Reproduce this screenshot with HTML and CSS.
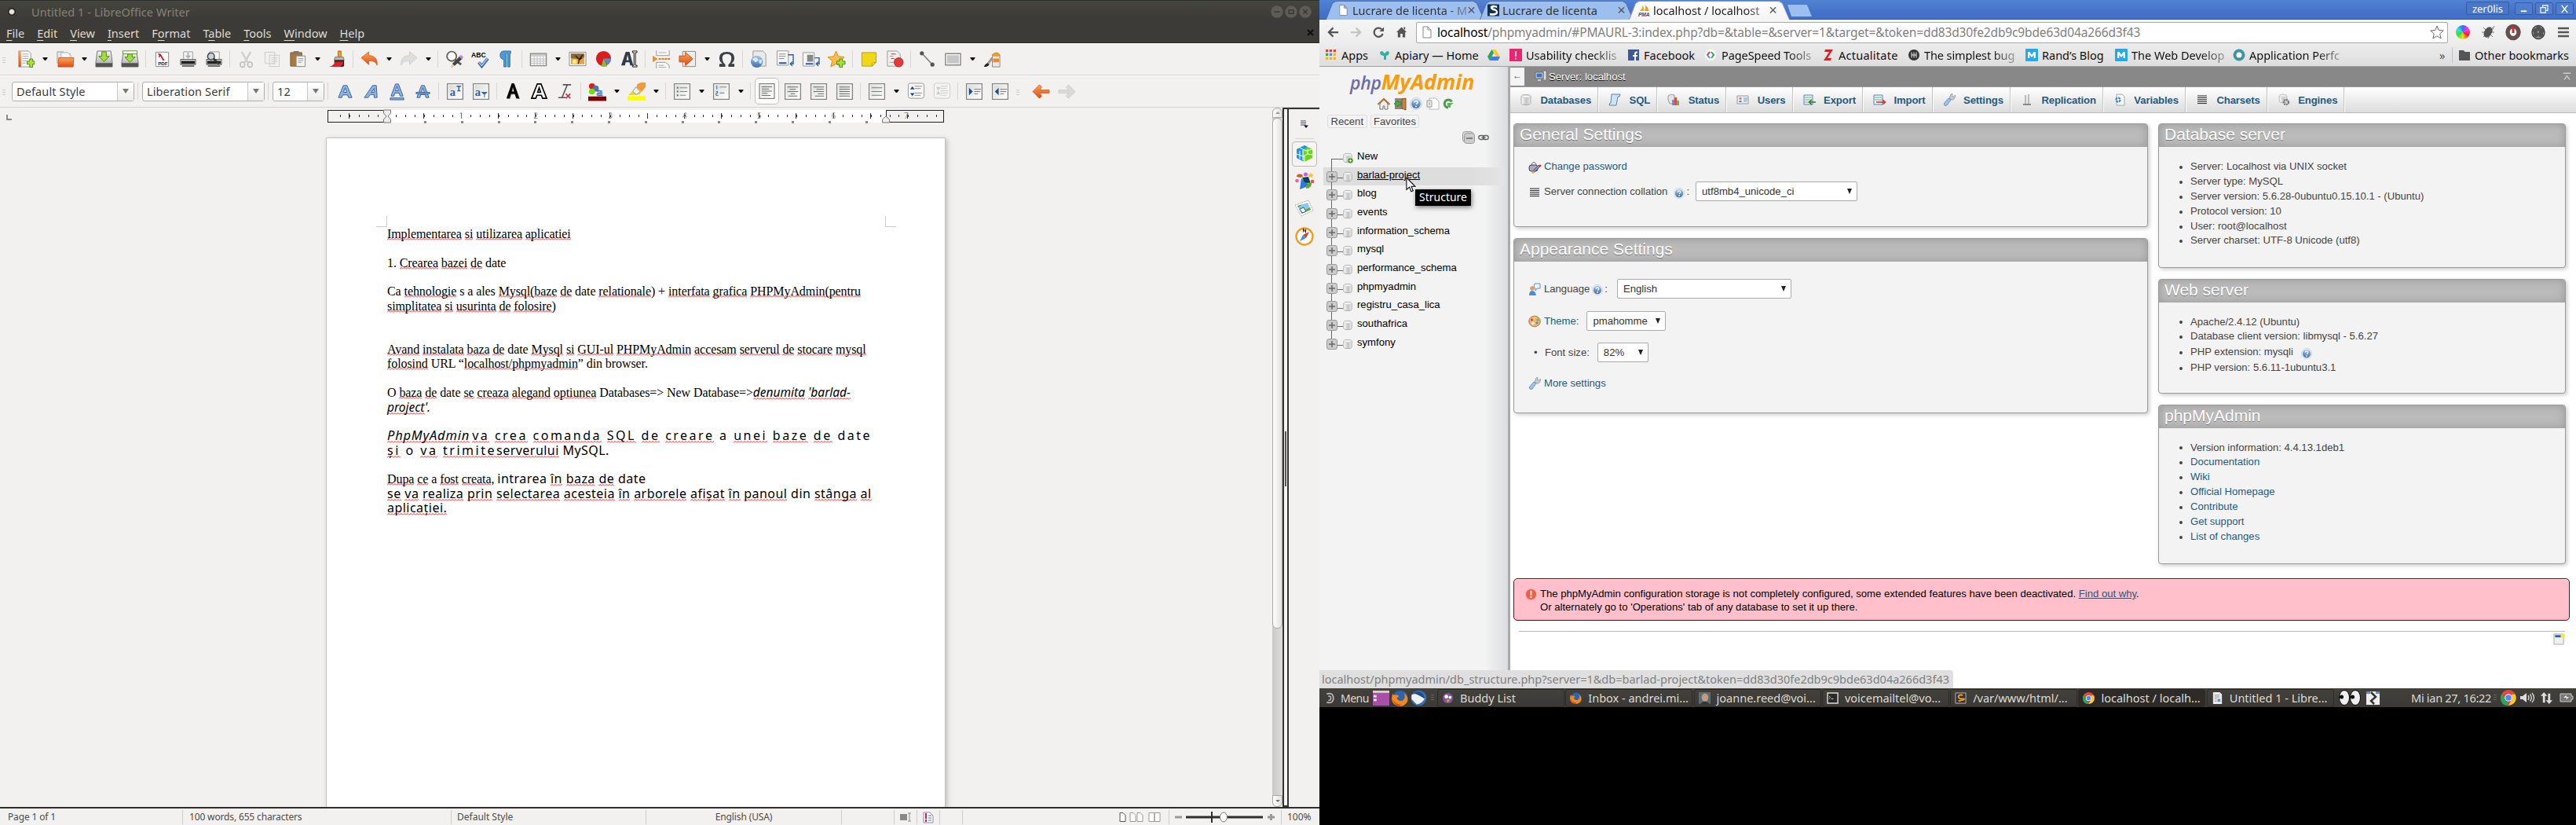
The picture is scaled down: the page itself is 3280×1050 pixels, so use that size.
FILE: index.html
```html
<!DOCTYPE html>
<html lang="ro">
<head>
<meta charset="utf-8">
<title>Desktop</title>
<link rel="stylesheet" href="styles.css">
</head>
<body>
<svg class="defs" aria-hidden="true">
  <defs>
    <linearGradient id="gOrange" x1="0" y1="0" x2="0" y2="1"><stop offset="0" stop-color="#f9a860"/><stop offset="1" stop-color="#e0480f"/></linearGradient>
    <linearGradient id="gGrey" x1="0" y1="0" x2="0" y2="1"><stop offset="0" stop-color="#f4f4f4"/><stop offset="1" stop-color="#a4a4a4"/></linearGradient>
    <linearGradient id="gPaper" x1="0" y1="0" x2="1" y2="1"><stop offset="0" stop-color="#d6dbd4"/><stop offset="1" stop-color="#fff"/></linearGradient>
    <linearGradient id="gCyl" x1="0" y1="0" x2="1" y2="0"><stop offset="0" stop-color="#fff"/><stop offset=".55" stop-color="#c4c4c4"/><stop offset="1" stop-color="#eee"/></linearGradient>
    <linearGradient id="gBlue" x1="0" y1="0" x2="0" y2="1"><stop offset="0" stop-color="#a9c6e8"/><stop offset="1" stop-color="#3c6fb0"/></linearGradient>
  </defs>
  <symbol id="arr" viewBox="0 0 6 4"><path d="M0 0h6v1L3.600 4H2.400L0 1z" fill="#111"/></symbol>
  <symbol id="new" viewBox="0 0 24 24"><path d="M3 1h13l3 3v18H3z" fill="#f7f7f7" stroke="#999"/><path d="M3 1h3v21H3z" fill="url(#gOrange)"/><path d="M8 5h8M8 8h8M8 11h8M8 14h6M8 17h4" stroke="#aaa"/><path d="M14 14.500h3.500V11.500h4v3h2.500v4h-2.500v4h-4v-4H14z" fill="#a8e040" stroke="#4e8a06"/></symbol>
  <symbol id="open" viewBox="0 0 24 24"><path d="M2 2h8l2 3h7v12H2z" fill="#e8e8e8" stroke="#999"/><path d="M7 3h9l4 4v6H7z" fill="#f6f6f6" stroke="#aaa"/><path d="M4 10h20l-1 12H3z" fill="url(#gOrange)" stroke="#d7501c"/></symbol>
  <symbol id="save" viewBox="0 0 24 24"><path d="M3 1h18l2 15v6H1v-6z" fill="url(#gGrey)" stroke="#777"/><path d="M1 17h22v5H1z" fill="#555"/><path d="M9 2h6v6h4l-7 7-7-7h4z" fill="#a4dc40" stroke="#4e8a06"/></symbol>
  <symbol id="saveas" viewBox="0 0 24 24"><path d="M3 4h18l2 12v6H1v-6z" fill="url(#gGrey)" stroke="#777"/><path d="M1 17h22v5H1z" fill="#555"/><path d="M9 5h6v4h4l-7 7-7-7h4z" fill="#a4dc40" stroke="#4e8a06"/><path d="M2.500 .8h19v4h-19z" fill="#fff" stroke="#5a9a20"/></symbol>
  <symbol id="print" viewBox="0 0 24 24"><path d="M6 2h12v11H6z" fill="#f6f6f6" stroke="#999"/><path d="M11 3h2v4h3l-4 4-4-4h3z" fill="#a9b0b5"/><path d="M2 12h20v7H2z" fill="#ddd" stroke="#555"/><path d="M3 14h18v4H3z" fill="#222"/><path d="M4 20h16v2H4z" fill="#666"/></symbol>
  <symbol id="preview" viewBox="0 0 24 24"><path d="M6 2h13v11H6z" fill="#f6f6f6" stroke="#999"/><path d="M2 12h20v7H2z" fill="#ddd" stroke="#555"/><path d="M3 14h18v4H3z" fill="#222"/><path d="M4 20h16v2H4z" fill="#666"/><circle cx="8" cy="8" r="4.500" fill="#c9d2d8" stroke="#444" stroke-width="1.500"/><path d="M11 11l8 7" stroke="#333" stroke-width="3"/></symbol>
  <symbol id="cut" viewBox="0 0 24 24"><path d="M6 2l8 14M18 2l-8 14" stroke="#cfcfcf" stroke-width="2.500" fill="none"/><ellipse cx="7" cy="19" rx="3" ry="3.500" fill="none" stroke="#c4c4c4" stroke-width="2"/><ellipse cx="17" cy="19" rx="3" ry="3.500" fill="none" stroke="#c4c4c4" stroke-width="2"/></symbol>
  <symbol id="copy" viewBox="0 0 24 24"><path d="M2.500 2.500h13v15h-13zM8.500 6.500h13v15h-13z" fill="#f0f0ef" stroke="#ccc"/><path d="M11 10h8M11 12.500h8M11 15h8M11 17.500h5" stroke="#ccc"/></symbol>
  <symbol id="paste" viewBox="0 0 24 24"><path d="M2 3h15v18H2z" fill="#a8793e" stroke="#7d5a2c"/><path d="M6 1h7v4H6z" fill="#777"/><path d="M9.500 7.500h12v14h-12z" fill="#f4f4f4" stroke="#888"/><path d="M12 11h7M12 13.500h7M12 16h5" stroke="#999"/></symbol>
  <symbol id="brush" viewBox="0 0 24 24"><path d="M13 1h4v8h-4z" fill="#e8a33c" stroke="#a86a12"/><path d="M9 9h11l1 4H8z" fill="#bbb" stroke="#777"/><path d="M8 13h13v8l-2 1H8z" fill="#35201f"/><path d="M1 22q7-2 8-7h11l-1 4-3 3z" fill="#d8222a"/></symbol>
  <symbol id="undo" viewBox="0 0 24 24"><path d="M1 10l10-8v5c8 0 12 5 11 13-1-4-4-6-11-6v5z" fill="url(#gOrange)" stroke="#e06a24"/></symbol>
  <symbol id="redo" viewBox="0 0 24 24"><path d="M23 10L13 2v5C5 7 1 12 2 20c1-4 4-6 11-6v5z" fill="#dedede" stroke="#cfcfcf"/></symbol>
  <symbol id="find" viewBox="0 0 24 24"><circle cx="8.500" cy="8" r="6.300" fill="#fafafa" stroke="#666" stroke-width="2"/><path d="M13 13l8 6" stroke="#555" stroke-width="3"/><path d="M8 23l2-6 9-9 4 3-10 9z" fill="#444"/><path d="M18 8l3-2 3 3-2 3z" fill="#c48ad0"/><path d="M8 23l1.500-5 3 2.500z" fill="#e8d88a"/></symbol>
  <symbol id="pil" viewBox="0 0 24 24"><path d="M18 1H9q-5 0-5 5.500T9 12v10h3V4h2v18h3V4h1z" fill="#4e9ad4" stroke="#2d72b0"/></symbol>
  <symbol id="table" viewBox="0 0 24 24"><path d="M1.500 4.500h21v16h-21z" fill="#fafafa" stroke="#888" stroke-width="1.500"/><path d="M2 5h20v3H2z" fill="#c9cec6"/><path d="M2 11.500h20M2 14.500h20M2 17.500h20M6.500 8v12M10.500 8v12M14.500 8v12M18.500 8v12" stroke="#bbb"/></symbol>
  <symbol id="image" viewBox="0 0 24 24"><path d="M1 2.500h22v18H1z" fill="#fff" stroke="#888"/><path d="M3 4.500h18v14H3z" fill="#e9a23c"/><path d="M3 4.500h18v5l-9 2-9-1z" fill="#8a6a3c"/><circle cx="8" cy="15" r="3" fill="#fff08c"/><path d="M13 18l1-6-5-5M14 12l5-6M14 13l4-3" stroke="#2a1c0a" stroke-width="1.300" fill="none"/></symbol>
  <symbol id="chart" viewBox="0 0 24 24"><ellipse cx="12" cy="11" rx="10" ry="10" fill="#d81e1e"/><path d="M12 11h10q0 6-5 8z" fill="#5b8cc8"/><path d="M12 11l5 10q-5 2-8 0z" fill="#7ec03c"/></symbol>
  <symbol id="abox" viewBox="0 0 24 24"><path d="M1 20L7 2h5l5 18h-4l-1-4H7l-1 4zM8 13h3L9.500 6z" fill="#333c44"/><path d="M16 1h6v2h-2v17h2v2h-6v-2h2V3h-2z" fill="#fff" stroke="#111"/></symbol>
  <symbol id="pbreak" viewBox="0 0 24 24"><path d="M5 0v7h17V0M5 24v-8h12l5 4v4" fill="#f6f6f6" stroke="#999"/><path d="M8 3h10M8 20h7M8 22.500h10" stroke="#aaa"/><path d="M8 11.500h15" stroke="#e07818" stroke-width="2" stroke-dasharray="3 1"/><path d="M0 7l7 4.500L0 16z" fill="#f0902c"/></symbol>
  <symbol id="field" viewBox="0 0 24 24"><path d="M5.500 1.500h17v20h-17z" fill="#eef0ec" stroke="#888"/><path d="M1 7.500h8v-5l10 9-10 9v-5H1z" fill="url(#gOrange)" stroke="#c4531a"/></symbol>
  <symbol id="omega" viewBox="0 0 24 24"><path d="M2 22v-4h4Q2 15 2 10 2 2 12 2t10 8q0 5-4 8h4v4h-8v-3q4-3 4-9 0-5-6-5t-6 5q0 6 4 9v3z" fill="#3a4248"/></symbol>
  <symbol id="link" viewBox="0 0 24 24"><path d="M4 1h13l4 4v16H4z" fill="#e9ebe8" stroke="#999"/><circle cx="9" cy="15" r="8" fill="url(#gBlue)"/><path d="M3 12q4-4 7-1t-3 5zM12 12l4 1-1 5-3-1z" fill="#dbe8f6"/></symbol>
  <symbol id="foot" viewBox="0 0 24 24"><path d="M1.500 .8h15v19h-15z" fill="#f6f6f6" stroke="#999"/><path d="M4 5h9M4 8h9M4 11h7" stroke="#888"/><path d="M4 17h10" stroke="#2a5ca8" stroke-width="2"/><path d="M16 6h7v12h-4m3-3l-3 3 3 3" fill="none" stroke="#2a5ca8" stroke-width="1.400"/></symbol>
  <symbol id="end" viewBox="0 0 24 24"><path d="M1.500 3h15v18h-15z" fill="#f6f6f6" stroke="#999"/><path d="M7 6h8v9H7z" fill="#888"/><path d="M5 18h10" stroke="#2a5ca8" stroke-width="2"/><path d="M17 10h6v8h-4m3-3l-3 3 3 3" fill="none" stroke="#2a5ca8" stroke-width="1.400"/></symbol>
  <symbol id="star" viewBox="0 0 24 24"><path d="M11 1l3 7 8 1-6 5 2 8-7-4-7 4 2-8-6-5 8-1z" fill="#fbbc4c" stroke="#d88a1c"/><path d="M12 14.500h3.500v-3h4v3H23v4h-3.500v4h-4v-4H12z" fill="#a8e040" stroke="#4e8a06"/></symbol>
  <symbol id="note" viewBox="0 0 24 24"><path d="M2.500 3h19v13l-5 5h-14z" fill="#f0d818" stroke="#b8a010"/><path d="M21 16l-5 5v-4z" fill="#fff48a" stroke="#b8a010"/></symbol>
  <symbol id="track" viewBox="0 0 24 24"><path d="M2 1h13l4 4v16H2z" fill="#f0f0f0" stroke="#999"/><path d="M5 8h5M5 16h6M11 12h5" stroke="#999"/><path d="M7 5h6M7 11h4" stroke="#d02020"/><circle cx="17" cy="16" r="6" fill="#e03a3a" stroke="#c02020"/></symbol>
  <symbol id="line" viewBox="0 0 24 24"><path d="M5 4l14 15" stroke="#777" stroke-width="1.500"/><circle cx="5" cy="4" r="2.700" fill="#555"/><circle cx="19" cy="19" r="2.700" fill="#555"/></symbol>
  <symbol id="rect" viewBox="0 0 24 24"><path d="M2 4.500h20v15H2z" fill="#fff" stroke="#888" stroke-width="1.500"/><path d="M4 6.500h16v11H4z" fill="#c6c6c6"/></symbol>
  <symbol id="paint" viewBox="0 0 24 24"><path d="M12 6h10v16H12z" fill="#e9e9e9" stroke="#888"/><path d="M12 5q5-5 10 0v3H12z" fill="#e89a2a"/><path d="M13 11h8v5h-8z" fill="#ee8a22"/><path d="M12 10l-6 8" stroke="#999" stroke-width="3"/><path d="M1 22q1-4 5-5l2 2q-2 3-7 3z" fill="#222"/></symbol>

  <symbol id="fB" viewBox="0 0 24 24"><path d="M3 20L9.500 4h5L21 20h-4.500l-1.200-3.500H8.700L7.500 20zM9.800 13h4.400L12 7z" fill="#8fb3de" stroke="#34629f"/></symbol>
  <symbol id="fI" viewBox="0 0 24 24"><path d="M3 20L14 4h5l1 16h-4v-4h-5l-3 4zM12.500 13H16V8z" fill="#8fb3de" stroke="#34629f"/></symbol>
  <symbol id="fU" viewBox="0 0 24 24"><path d="M4 18L10 2h4l6 16h-4l-1-4H9l-1 4zM10 11h4l-2-6zM3 20.500h18v2.500H3z" fill="#8fb3de" stroke="#34629f"/></symbol>
  <symbol id="fS" viewBox="0 0 24 24"><path d="M4 20L10 4h4l6 16h-4l-1-4H9l-1 4zM10 13h4l-2-6z" fill="#8fb3de" stroke="#34629f"/><path d="M3 13h18v2H3z" fill="#8fb3de" stroke="#34629f"/></symbol>
  <symbol id="page" viewBox="0 0 24 24"><path d="M1.700 1.700h20.600v20.600H1.700z" fill="#fff" stroke="#848484" stroke-width="1.400"/><path d="M3.500 3.500h17v17h-17z" fill="url(#gPaper)"/></symbol>
  <symbol id="clear" viewBox="0 0 24 24"><path d="M9 3h11M3 20h10M15 3L8 20" stroke="#555" stroke-width="1.600"/><path d="M13 15l6 6M19 15l-6 6" stroke="#d03a4a" stroke-width="2"/></symbol>
  <symbol id="hl" viewBox="0 0 24 24"><path d="M1 17L13 5l7 6-4 5z" fill="#ecd21c"/><path d="M13 2l5-2h6v6l-5 6-7-6z" fill="#f09a3c"/><path d="M11 6l6 6-5 4-5-4z" fill="#eee" stroke="#999"/><path d="M0 18h24v6H0z" fill="#ffff00"/></symbol>
  <symbol id="larr" viewBox="0 0 24 24"><path d="M1 12l9-9 3 3-3 4h13v4H10l3 4-3 3z" fill="url(#gOrange)" stroke="#d86434"/></symbol>
  <symbol id="rarr" viewBox="0 0 24 24"><path d="M23 12l-9-9-3 3 3 4H1v4h13l-3 4 3 3z" fill="#d9dad8" stroke="#cfcfcf"/></symbol>
  <symbol id="cubes" viewBox="0 0 24 24"><path d="M2 6l10-5 10 5v11l-10 5-10-5z" fill="#6cd41c"/><path d="M2 6l10-5 4 2-6 4v14l-8-4z" fill="#1c96ec"/><path d="M2 12l8 3 6-3 6 1M10 7v13M16 6v6M6 8v10M6 4l8 4 8-2M12 14v8" stroke="#fff" fill="none"/></symbol>
  <symbol id="wand" viewBox="0 0 24 24"><path d="M6 22L8 8l11 9z" fill="#2a7cd8"/><path d="M9 7l8-1 3 9-8-2z" fill="#123c5c"/><path d="M2 6q0-5 7-3l1 3-3 1z" fill="#c8641c"/><path d="M14 21q7 0 7-7l-4-1q0 4-3 4z" fill="#5cac1c"/><circle cx="13.500" cy="3" r="2.500" fill="#c45cf0"/><path d="M20 0l1.500 3H24l-2 2 1 3-3-2-3 2 1-3-2-2h3z" fill="#f4c83c"/><circle cx="2.500" cy="11" r="2.300" fill="#f05cb8"/><circle cx="22" cy="12" r="2.300" fill="#f04a5c"/></symbol>
  <symbol id="gallery" viewBox="0 0 24 24"><path d="M0 7l17-6 6 13-15 7z" fill="#fff" stroke="#aaa" stroke-dasharray="2 1"/><path d="M3 8l13-4 4 9-12 5z" fill="#8cc8f4"/><path d="M3 8l7-2-6 4zM8 18l12-5-1-3-8 4z" fill="#5cac2c"/><path d="M6 12l5-2 3 5-5 2z" fill="#fff" stroke="#2a5c9c"/></symbol>
  <symbol id="compass" viewBox="0 0 24 24"><circle cx="12" cy="12" r="10.500" fill="#fff" stroke="#f09c1c" stroke-width="2.400"/><path d="M18 6l-4 8-4-4z" fill="#e03c2c"/><path d="M6 18l4-8 4 4z" fill="#4a8ce0"/><path d="M10.500 6.500v-4l3 4v-4" stroke="#333" stroke-width="1.200" fill="none"/></symbol>

  <symbol id="doc" viewBox="0 0 16 16"><path d="M3 1h6l4 4v10H3zM9 1v4h4" fill="#fff" stroke="#888"/></symbol>
  <symbol id="db" viewBox="0 0 16 16"><path d="M2 3.500Q2 1.500 8 1.500t6 2v9q0 2-6 2t-6-2z" fill="url(#gCyl)" stroke="#aaa"/><ellipse cx="8" cy="3.600" rx="5.500" ry="1.700" fill="#f6f6f6" stroke="#bbb" stroke-width=".6"/></symbol>
  <symbol id="plus" viewBox="0 0 14 14"><rect x=".5" y=".5" width="13" height="13" rx="2.500" fill="#ccc" stroke="#999"/><path d="M7 3v8M3 7h8" stroke="#666" stroke-width="1.500"/></symbol>
  <symbol id="help" viewBox="0 0 16 16"><circle cx="8" cy="8" r="7.300" fill="#fff" stroke="#b8c8dc"/><circle cx="8" cy="8" r="6" fill="url(#gBlue)"/><path d="M6 6.500q0-2 2-2t2 1.700Q10 7.500 8 8.700" fill="none" stroke="#fff" stroke-width="1.500"/><circle cx="8" cy="11.400" r="1" fill="#fff"/></symbol>
  <symbol id="wrench" viewBox="0 0 16 16"><path d="M10 7l-2 -1 2-5 2-1-.5 3.500 2 .5 2-2q.5 3-1.500 5t-3.500 1z" fill="#c8ccd0" stroke="#8a8f96" stroke-width=".7"/><path d="M1 13l6-7 3 2-5 7q-3 2-4-2z" fill="#9cc0f0" stroke="#5c84bc" stroke-width=".8"/></symbol>
  <symbol id="bars" viewBox="0 0 16 16"><path d="M2 3h12M2 5.400h12M2 7.800h12M2 10.200h12M2 12.600h12" stroke="#222"/></symbol>
  <symbol id="chrome" viewBox="0 0 16 16"><circle cx="8" cy="8" r="8" fill="#e04a3c"/><path d="M1 4l5 6 2 6Q0 16 0 8q0-2 1-4z" fill="#2ca45c"/><path d="M15 4.500Q18 14 8 16l4-8-1-3.500z" fill="#fcc934"/><circle cx="8" cy="8" r="3.800" fill="#fff"/><circle cx="8" cy="8" r="3" fill="#4a8cf4"/></symbol>
  <symbol id="ffox" viewBox="0 0 16 16"><circle cx="8.500" cy="7.500" r="7" fill="#2c64b4"/><path d="M1 3q0 2 2 2 3-1 4 1l-2 2q2 4 6 2 3-2 1-7 5 4 3 9-3 4-7 4-8-1-8-8z" fill="#f08a1c"/><path d="M1 9q2 5 8 5l-1 2Q2 15 1 9z" fill="#d8481c"/></symbol>
  <symbol id="tbird" viewBox="0 0 16 16"><circle cx="8" cy="8" r="7.500" fill="#3470b8"/><path d="M1 5q4-2 6 0l7 3q-2 5-8 6L1 9z" fill="#f0f0f0"/><path d="M3 3q5-3 9 1l2 5-6-4z" fill="#1c4c8c"/></symbol>
  <symbol id="moz" viewBox="0 0 16 16"><rect width="16" height="16" rx="1" fill="#24aae4"/><path d="M3 12V4h2.500L8 8l2.500-4H13v8h-2.300V8L8 11 5.300 8v4z" fill="#fff"/></symbol>
</svg>

<main class="screen">
<section class="writer">
  <header class="w-top">
    <div class="w-title"><i class="dot"></i><span class="ui t-title">Untitled 1 - LibreOffice Writer</span>
      <span class="wbtns"><svg viewBox="0 0 16 16"><circle cx="8" cy="8" r="7.700"/><path d="M4.500 8h7"/></svg><svg viewBox="0 0 16 16"><circle cx="8" cy="8" r="7.700"/><path d="M5 5.800h6v4.400H5z"/></svg><svg viewBox="0 0 16 16"><circle cx="8" cy="8" r="7.700"/><path d="M5.300 5.300l5.400 5.400M10.700 5.300l-5.400 5.400"/></svg></span></div>
    <nav class="w-menu ui"><span><u>F</u>ile</span><span><u>E</u>dit</span><span><u>V</u>iew</span><span><u>I</u>nsert</span><span>F<u>o</u>rmat</span><span>T<u>a</u>ble</span><span><u>T</u>ools</span><span><u>W</u>indow</span><span><u>H</u>elp</span><svg class="wx" viewBox="0 0 9 9"><path d="M1 1l7 7M8 1L1 8"/></svg></nav>
  </header>
  <div class="bar bar1"><i class="grip"></i>
    <svg class="b"><use href="#new"/></svg><svg class="a"><use href="#arr"/></svg><svg class="b"><use href="#open"/></svg><svg class="a"><use href="#arr"/></svg><svg class="b"><use href="#save"/></svg><svg class="b"><use href="#saveas"/></svg><i class="s"></i>
    <svg class="b" viewBox="0 0 24 24"><path d="M3.500 2.500h17v19h-17z" fill="#fff" stroke="#888"/><path d="M6 4l4 1 5 8-2 1-3-6-3 2 1-3z" fill="#d81818"/><text class="pdft" x="6.500" y="20">PDF</text></svg><svg class="b"><use href="#print"/></svg><svg class="b"><use href="#preview"/></svg><i class="s"></i>
    <svg class="b"><use href="#cut"/></svg><svg class="b"><use href="#copy"/></svg><svg class="b"><use href="#paste"/></svg><svg class="a"><use href="#arr"/></svg><svg class="b"><use href="#brush"/></svg><i class="s"></i>
    <svg class="b"><use href="#undo"/></svg><svg class="a"><use href="#arr"/></svg><svg class="b"><use href="#redo"/></svg><svg class="a"><use href="#arr"/></svg><i class="s"></i>
    <svg class="b"><use href="#find"/></svg><svg class="b" viewBox="0 0 24 24"><text class="abct" x="0" y="9">ABC</text><path d="M10 16l4 5 8-10" fill="none" stroke="#2f62ad" stroke-width="4"/><path d="M10.500 16.500l3.500 4 7.500-9.500" fill="none" stroke="#b6d0f2" stroke-width="1.600"/></svg><svg class="b"><use href="#pil"/></svg><i class="s"></i>
    <svg class="b"><use href="#table"/></svg><svg class="a"><use href="#arr"/></svg><svg class="b"><use href="#image"/></svg><svg class="b"><use href="#chart"/></svg><svg class="b"><use href="#abox"/></svg><i class="s"></i>
    <svg class="b"><use href="#pbreak"/></svg><svg class="b"><use href="#field"/></svg><svg class="a"><use href="#arr"/></svg><svg class="b"><use href="#omega"/></svg><i class="s"></i>
    <svg class="b"><use href="#link"/></svg><svg class="b"><use href="#foot"/></svg><svg class="b"><use href="#end"/></svg><svg class="b"><use href="#star"/></svg><i class="s"></i>
    <svg class="b"><use href="#note"/></svg><svg class="b"><use href="#track"/></svg><i class="s"></i>
    <svg class="b"><use href="#line"/></svg><svg class="b"><use href="#rect"/></svg><svg class="a"><use href="#arr"/></svg><svg class="b"><use href="#paint"/></svg>
  </div>
  <div class="bar bar2"><i class="grip"></i>
    <div class="combo ui c1"><span>Default Style</span><em></em></div><i class="s s2"></i>
    <div class="combo ui c1"><span>Liberation Serif</span><em></em></div><i class="s s2"></i>
    <div class="combo ui c2"><span>12</span><em></em></div><i class="s s2"></i>
    <svg class="b"><use href="#fB"/></svg><svg class="b"><use href="#fI"/></svg><svg class="b"><use href="#fU"/></svg><svg class="b"><use href="#fS"/></svg><i class="s"></i>
    <svg class="b" viewBox="0 0 24 24"><use href="#page"/><text class="aa" x="5" y="18">a</text><path d="M14 5h6M17 5v6M15 11h4" stroke="#34629f" stroke-width="1.500"/></svg><svg class="b" viewBox="0 0 24 24"><use href="#page"/><text class="aa" x="4" y="18">a</text><path d="M13 13h7l-3.500 3zM16.500 16v4" fill="#34629f" stroke="#34629f"/></svg><i class="s"></i>
    <svg class="b" viewBox="0 0 24 24"><path d="M4 22L11 2h3l7 20h-4l-2-6h-5l-2 6zM11 13h3l-1.500-6z" fill="#999"/><path d="M3 21L10 1h3l7 20h-4l-2-6h-5l-2 6zM10 12h3l-1.500-6z" fill="#000"/></svg><svg class="b" viewBox="0 0 24 24"><path d="M2 21L9.500 2h5L22 21h-5.500l-1.500-4H9l-1.500 4zM10 13h4l-2-6z" fill="#fff" stroke="#000" stroke-width="1.700"/></svg><svg class="b"><use href="#clear"/></svg><i class="s"></i>
    <svg class="b" viewBox="0 0 24 24"><circle cx="5" cy="5" r="4" fill="#d81c1c"/><circle cx="10" cy="8" r="4" fill="#4a74b4"/><circle cx="5" cy="12" r="4" fill="#6cdc1c"/><text class="ca" x="11" y="18">a</text><path d="M0 18.500h24v6H0z" fill="#800000"/></svg><svg class="a"><use href="#arr"/></svg><svg class="b"><use href="#hl"/></svg><svg class="a"><use href="#arr"/></svg><i class="s"></i>
    <svg class="b" viewBox="0 0 24 24"><use href="#page"/><path d="M9 7h10M9 12h10M9 17h8" stroke="#888" stroke-width="1.200"/><path d="M5 7h2M5 12h2M5 17h2" stroke="#666" stroke-width="2"/></svg><svg class="a"><use href="#arr"/></svg>
    <svg class="b" viewBox="0 0 24 24"><use href="#page"/><path d="M10 6h9M10 14h6" stroke="#888" stroke-width="1.200"/><path d="M6 4v5M5 12h2v2H5v3h3" stroke="#34629f" fill="none"/></svg><svg class="a"><use href="#arr"/></svg><i class="s"></i>
    <svg class="b on" viewBox="0 0 24 24"><use href="#page"/><path d="M5 6h14M5 9h10M5 12h14M5 15h8M5 18h12" stroke="#666"/></svg><svg class="b" viewBox="0 0 24 24"><use href="#page"/><path d="M5 6h14M8 9h8M5 12h14M9 15h6M6 18h12" stroke="#666"/></svg><svg class="b" viewBox="0 0 24 24"><use href="#page"/><path d="M5 6h14M9 9h10M5 12h14M11 15h8M7 18h12" stroke="#666"/></svg><svg class="b" viewBox="0 0 24 24"><use href="#page"/><path d="M5 6h14M5 9h14M5 12h14M5 15h14M5 18h14" stroke="#666"/></svg><i class="s"></i>
    <svg class="b" viewBox="0 0 24 24"><use href="#page"/><path d="M5 7h14M5 12h14M5 17h14" stroke="#777"/></svg><svg class="a"><use href="#arr"/></svg>
    <svg class="b" viewBox="0 0 24 24"><rect x="1.500" y="1" width="21" height="20" rx="3" fill="#fafafa" stroke="#999"/><path d="M10 5h10M10 8h8M10 14h10M10 17h8" stroke="#888"/><path d="M4 9l3-4 3 4zM4 14h6l-3 4z" fill="#1c4c8c"/></svg><svg class="b" viewBox="0 0 24 24"><rect x="1.500" y="1" width="21" height="20" rx="3" fill="#f4f4f3" stroke="#ccc"/><path d="M10 5h10M10 8h8M10 11h10M10 14h10M10 17h8" stroke="#ccc"/><path d="M4 6h6L4 16h6z" fill="#ccc"/></svg><i class="s"></i>
    <svg class="b" viewBox="0 0 24 24"><use href="#page"/><path d="M12 9h9M12 12h8M12 15h5" stroke="#777"/><path d="M5 7l5 5-5 5z" fill="#1c4c8c"/></svg><svg class="b" viewBox="0 0 24 24"><use href="#page"/><path d="M12 9h9M12 12h8M12 15h5" stroke="#777"/><path d="M10 7l-5 5 5 5z" fill="#1c4c8c"/></svg><i class="grip g2"></i>
    <svg class="b"><use href="#larr"/></svg><svg class="b"><use href="#rarr"/></svg>
  </div>
  <div class="w-body">
    <div class="canvas">
      <div class="rulerrow"><i class="tabsel"></i><div class="ruler"><div class="rwhite"></div><div class="nums ui"><span>1</span><span>2</span><span>3</span><span>4</span><span>5</span><span>6</span><span>7</span></div>
        <svg class="ind" viewBox="0 0 12 18"><path d="M1.500 1h9v4L7 9l3.500 4v4h-9v-4L5 9 1.500 5z" fill="#eee" stroke="#777"/></svg><svg class="ind r" viewBox="0 0 12 18"><path d="M1.500 17v-4L6 9l4.500 4v4z" fill="#eee" stroke="#777"/></svg></div></div>
      <div class="sheet">
        <div class="corners"><i></i><i></i></div>
        <div class="text">
          <p><s>Implementarea</s> <s>si</s> <s>utilizarea</s> <s>aplicatiei</s></p>
          <p></p>
          <p>1. <s>Crearea</s> <s>bazei</s> <s>de</s> date</p>
          <p></p>
          <p>Ca <s>tehnologie</s> s a ales <s>Mysql(baze</s> <s>de</s> date <s>relationale</s>) + <s>interfata</s> <s>grafica</s> <s>PHPMyAdmin(pentru</s></p>
          <p><s>simplitatea</s> <s>si</s> <s>usurinta</s> <s>de</s> <s>folosire</s>)</p>
          <p></p><p></p>
          <p><s>Avand</s> <s>instalata</s> <s>baza</s> <s>de</s> date <s>Mysql</s> <s>si</s> <s>GUI-ul</s> <s>PHPMyAdmin</s> <s>accesam</s> <s>serverul</s> <s>de</s> <s>stocare</s> <s>mysql</s></p>
          <p><s>folosind</s> URL “<s>localhost/phpmyadmin</s>” din browser.</p>
          <p></p>
          <p>O <s>baza</s> <s>de</s> date <s>se</s> <s>creaza</s> <s>alegand</s> <s>optiunea</s> Databases=&gt; New Database=&gt;<em><s>denumita</s> <s>'barlad-</s></em></p>
          <p><em><s>project</s>'.</em></p>
          <p></p>
          <p><em class="pm"><s>PhpMyAdmin</s></em><b class="wide"><s>va</s> <s>crea</s> <s>comanda</s> <s>SQL</s> <s>de</s> <s>creare</s> a <s>unei</s> <s>baze</s> <s>de</s> date</b></p>
          <p><b class="wide"><s>şi</s> o <s>va</s> <s>trimite</s></b><b class="nar"><s>serverului</s> MySQL.</b></p>
          <p></p>
          <p><s>Dupa</s> <s>ce</s> a <s>fost</s> <s>creata</s>, <b class="nar">intrarea <s>în</s> <s>baza</s> <s>de</s> date</b></p>
          <p><b class="nar"><s>se</s> <s>va</s> <s>realiza</s> <s>prin</s> <s>selectarea</s> <s>acesteia</s> <s>în</s> <s>arborele</s> <s>afişat</s> <s>în</s> <s>panoul</s> din <s>stânga</s> <s>al</s></b></p>
          <p><b class="nar"><s>aplicaţiei.</s></b></p>
        </div>
      </div>
    </div>
    <div class="vscroll"><i class="up"></i><i class="thumb"></i><i class="down"></i></div>
    <div class="split"></div>
    <aside class="side"><svg class="sm" viewBox="0 0 10 10"><path d="M0 1h7M0 3.500h7M0 6h7" stroke="#445" stroke-width="1.200"/><path d="M4 6.500h6L7 10z" fill="#113"/></svg><i class="hr"></i>
      <div class="on"><svg><use href="#cubes"/></svg></div><div><svg><use href="#wand"/></svg></div><div><svg><use href="#gallery"/></svg></div><div><svg><use href="#compass"/></svg></div></aside>
  </div>
  <footer class="w-status ui"><span class="st1">Page 1 of 1</span><span class="st2">100 words, 655 characters</span><span class="st3">Default Style</span><span class="st4">English (USA)</span><span class="st5"></span><span class="st6"><svg viewBox="0 0 14 12"><path d="M0 2h9v8H0z" fill="#888"/><path d="M10 1h4M12 1v10M10 11h4" stroke="#888"/></svg></span><span class="st7"><svg viewBox="0 0 14 14"><path d="M1 1h8l4 4v9H1z" fill="#fff" stroke="#88c"/><path d="M7 5h4M7 8h4M7 11h4" stroke="#66c"/><path d="M4 2v7M4 10v3" stroke="#e02020" stroke-width="2"/></svg></span><span class="st8"></span><span class="st9"><svg viewBox="0 0 56 14"><path d="M2 1.500h4l3 3v8H2z" fill="#fff" stroke="#555"/><path d="M15 1.500h4l3 3v8h-7zM24 1.500h4l3 3v8h-7zM39 1.500h7v11h-7zM46 1.500h7v11h-7z" fill="#fff" stroke="#999"/></svg></span><span class="st10"><svg viewBox="0 0 128 16"><path d="M0 8h9M118 8h9M122.500 4v8" stroke="#999" stroke-width="3"/><path d="M14 8h98" stroke="#2e2e2c" stroke-width="3"/><path d="M47 1v14" stroke="#2e2e2c" stroke-width="2"/><ellipse cx="62" cy="8" rx="4.500" ry="6" fill="#fff" stroke="#777"/></svg></span><span class="st11">100%</span></footer>
</section>

<section class="right">
  <div class="c-tabs">
    <div class="tab t1"><div class="in"><svg><use href="#doc"/></svg><span class="ui fade">Lucrare de licenta - M</span><b>×</b></div></div>
    <div class="tab t2"><div class="in"><svg viewBox="0 0 16 16"><path d="M0 0h16v16H0z" fill="#12304c"/><path d="M13 2Q4 0 4 4t7 5q3 4-8 3v3q11 1 11-4T7 5q2-2 6 0z" fill="#fff"/></svg><span class="ui">Lucrare de licenta</span><b>×</b></div></div>
    <div class="tab t3"><div class="in"><svg viewBox="0 0 16 16"><path d="M2 9q4-3 4-8 2 3 1 8zM8 9q3-4 1-8 5 3 5 8z" fill="#f49a1c"/><text class="pmat" x="0" y="16">PMA</text></svg><span class="ui fade">localhost / localhost</span><b>×</b></div></div>
    <i class="newtab"></i>
    <div class="c-win"><span class="user ui">zer0lis</span><span><svg viewBox="0 0 12 12"><path d="M2 9h8" stroke-width="2"/></svg></span><span><svg viewBox="0 0 12 12"><path d="M4 4V1h7v7H8M1 4h7v7H1z"/></svg></span><span><svg viewBox="0 0 12 12"><path d="M2 1l8 10M10 1L2 11" stroke-width="1.600"/></svg></span></div>
  </div>
  <div class="c-bar">
    <svg class="n1" viewBox="0 0 16 16"><path d="M15 8H2M8 2L2 8l6 6" /></svg><svg class="n2" viewBox="0 0 16 16"><path d="M1 8h13M8 2l6 6-6 6"/></svg><svg class="n3" viewBox="0 0 16 16"><path d="M13.500 10A6 6 0 1 1 12 4"/><path d="M15 1v6H9z" fill="#555" stroke="none"/></svg><svg class="n4" viewBox="0 0 16 16"><path d="M8 1l7 7h-2v7H9.500v-5h-3v5H3V8H1zM11 1h2v4l-2-2z" fill="#555" stroke="none"/></svg>
    <div class="omni ui"><svg><use href="#doc"/></svg><span><strong>localhost</strong>/phpmyadmin/#PMAURL-3:index.php?db=&amp;table=&amp;server=1&amp;target=&amp;token=dd83d30fe2db9c9bde63d04a266d3f43</span><svg class="fav" viewBox="0 0 18 18"><path d="M9 1l2.200 5.500 6 .5-4.500 4 1.400 6L9 13.800 3.900 17l1.400-6L.8 7l6-.5z" fill="#fff" stroke="#666"/></svg></div>
    <i class="wheel"></i>
    <svg class="x" viewBox="0 0 18 18"><path d="M3 3l12 12M15 3L3 15M1 9h16M9 17l8-16" stroke="#777" stroke-width="1"/><ellipse cx="9" cy="9" rx="3.500" ry="6" fill="#555" transform="rotate(30 9 9)"/></svg>
    <svg class="x" viewBox="0 0 18 18"><ellipse cx="9" cy="9" rx="8.500" ry="9" fill="#e02424"/><ellipse cx="9" cy="9" rx="5.500" ry="6" fill="#fff"/><path d="M9 2v8" stroke="#e02424" stroke-width="3"/></svg>
    <svg class="x" viewBox="0 0 18 18"><ellipse cx="9" cy="9" rx="8" ry="8.500" fill="#999" stroke="#444" stroke-width="1.500"/><g fill="#444"><circle cx="9" cy="4" r="2"/><circle cx="5" cy="7" r="2"/><circle cx="13" cy="7" r="2"/><circle cx="6" cy="12" r="2"/><circle cx="12" cy="12" r="2"/></g></svg>
    <svg class="burger" viewBox="0 0 14 14"><path d="M0 2h14M0 7h14M0 12h14" stroke="#555" stroke-width="2.600"/></svg>
  </div>
  <div class="c-marks ui">
    <div class="m m0"><svg viewBox="0 0 14 14"><g fill="#e04040"><path d="M0 0h3.500v3.500H0zM5.200 0h3.500v3.500H5.200zM10.400 0h3.500v3.500h-3.500z"/></g><path d="M0 5.200h3.500v3.500H0z" fill="#2ca45c"/><path d="M5.200 5.200h3.500v3.500H5.200z" fill="#4a8cf4"/><path d="M10.400 5.200h3.500v3.500h-3.500zM0 10.400h3.500v3.500H0zM5.200 10.400h3.500v3.500H5.200zM10.400 10.400h3.500v3.500h-3.500z" fill="#f4b41c"/></svg><span>Apps</span></div>
    <div class="m m1"><svg viewBox="0 0 14 14"><path d="M1 3l3-1 3 3 3-3 3 1-1 4-3 1v5H6V8L2 7z" fill="#3caca0"/></svg><span>Apiary — Home</span></div>
    <div class="m m2"><svg viewBox="0 0 16 14"><path d="M5.500 0h5l5.500 9h-5z" fill="#fcc934"/><path d="M5.500 0L8 4.500 2.500 14 0 9z" fill="#2ca45c"/><path d="M5 9h11l-2.500 5h-11z" fill="#3c7cec"/></svg></div>
    <div class="m m3"><svg viewBox="0 0 16 16"><path d="M0 0h16v16H0z" fill="#ec2472"/><path d="M8 3v7M8 11.500v2" stroke="#fff" stroke-width="1.600"/></svg><span class="fade">Usability checklis</span></div>
    <div class="m m4"><svg viewBox="0 0 14 14"><path d="M0 0h14v14H0z" fill="#3b5998"/><path d="M8 14V9H6V7h2V5q0-3 4-2.500v2q-2-.3-2 1V7h2l-.3 2H10v5z" fill="#fff"/></svg><span>Facebook</span></div>
    <div class="m m5"><svg viewBox="0 0 14 14"><circle cx="7" cy="7" r="7" fill="#fff"/><path d="M6 3L3 7l3 4" stroke="#4a8cf4" stroke-width="2" fill="none"/><path d="M8 3l3 4-3 4" stroke="#2ca45c" stroke-width="2" fill="none"/><path d="M6 3L3 7" stroke="#e04a3c" stroke-width="2"/></svg><span class="fade">PageSpeed Tools</span></div>
    <div class="m m6"><svg viewBox="0 0 12 14"><path d="M2 0h10L5 11h5l-1 3H0L7 3H1z" fill="#e02020"/></svg><span>Actualitate</span></div>
    <div class="m m7"><svg viewBox="0 0 14 14"><ellipse cx="7" cy="7" rx="7" ry="7" fill="#333"/><path d="M4 3.500v7M7 3.500v7M10 3.500v7M4 7h6" stroke="#eee"/></svg><span class="fade">The simplest bug</span></div>
    <div class="m m8"><svg><use href="#moz"/></svg><span>Rand’s Blog</span></div>
    <div class="m m9"><svg><use href="#moz"/></svg><span class="fade">The Web Develop</span></div>
    <div class="m m10"><svg viewBox="0 0 16 16"><circle cx="8" cy="8" r="5.500" fill="#fff" stroke="#3c94a4" stroke-width="4"/></svg><span class="fade">Application Perfc</span></div>
    <div class="m more">»</div>
    <div class="m other"><svg viewBox="0 0 14 14"><path d="M0 1h6l1.500 2H14v11H0z" fill="#555"/></svg><span>Other bookmarks</span></div>
  </div>

  <div class="pma">
    <aside class="nav">
      <div class="logo"><i>php</i><b>MyAdmin</b></div>
      <div class="nicons"><svg viewBox="0 0 16 16"><path d="M3 8v7h4v-4h2v4h4V8L8 3z" fill="#eee" stroke="#777"/><path d="M.5 9L8 2l7.500 7" fill="none" stroke="#b4743c" stroke-width="2.200"/></svg><svg viewBox="0 0 16 16"><path d="M1 1h11v14H1z" fill="#888"/><path d="M10 2l5-1v15l-5-2z" fill="#c8843c" stroke="#8c5420"/><path d="M0 8l5-4v2h4v4H5v2z" fill="#4cac3c" stroke="#2c7420" stroke-width=".7"/></svg><svg><use href="#help"/></svg><svg viewBox="0 0 16 16"><path d="M4 1h8l4 4v10H4z" fill="#fff" stroke="#bbb"/><path d="M1 4h6v8H1z" fill="#eee" stroke="#999"/><path d="M4 6v4" stroke="#999"/></svg><svg viewBox="0 0 16 16"><path d="M12.500 5.500A5 5 0 1 0 8 13" fill="none" stroke="#4c9c4c" stroke-width="3"/><path d="M7 7h8l-4 3v3H9l-2-2z" fill="#5cb45c"/></svg></div>
      <div class="rf"><span>Recent</span><span>Favorites</span></div>
      <div class="coll"><svg viewBox="0 0 16 16"><rect x=".5" y=".5" width="13" height="13" rx="3" fill="#ddd" stroke="#999"/><rect x="2.500" y="2.500" width="13" height="13" rx="3" fill="#ccc" stroke="#999"/><path d="M5 9h8" stroke="#666" stroke-width="1.500"/></svg><svg viewBox="0 0 14 16"><rect x=".8" y="5.500" width="7" height="5" rx="2.500" fill="none" stroke="#666" stroke-width="1.400"/><rect x="6.200" y="5.500" width="7" height="5" rx="2.500" fill="none" stroke="#666" stroke-width="1.400"/><path d="M4 8h6" stroke="#666"/></svg></div>
      <ul class="tree">
        <li class="first"><i></i><svg class="d" viewBox="0 0 16 16"><use href="#db"/><circle cx="12" cy="12" r="3.700" fill="#4c9c2c"/><path d="M12 10v4M10 12h4" stroke="#fff"/></svg><span>New</span></li>
        <li class="hov"><svg class="p"><use href="#plus"/></svg><svg class="d"><use href="#db"/></svg><span>barlad-project</span></li>
        <li><svg class="p"><use href="#plus"/></svg><svg class="d"><use href="#db"/></svg><span>blog</span></li>
        <li><svg class="p"><use href="#plus"/></svg><svg class="d"><use href="#db"/></svg><span>events</span></li>
        <li><svg class="p"><use href="#plus"/></svg><svg class="d"><use href="#db"/></svg><span>information_schema</span></li>
        <li><svg class="p"><use href="#plus"/></svg><svg class="d"><use href="#db"/></svg><span>mysql</span></li>
        <li><svg class="p"><use href="#plus"/></svg><svg class="d"><use href="#db"/></svg><span>performance_schema</span></li>
        <li><svg class="p"><use href="#plus"/></svg><svg class="d"><use href="#db"/></svg><span>phpmyadmin</span></li>
        <li><svg class="p"><use href="#plus"/></svg><svg class="d"><use href="#db"/></svg><span>registru_casa_lica</span></li>
        <li><svg class="p"><use href="#plus"/></svg><svg class="d"><use href="#db"/></svg><span>southafrica</span></li>
        <li class="last"><svg class="p"><use href="#plus"/></svg><svg class="d"><use href="#db"/></svg><span>symfony</span></li>
      </ul>
    </aside>
    <div class="main">
      <div class="crumb"><span class="back">←</span><svg viewBox="0 0 16 16"><path d="M11 1h4v12h-4z" fill="#ddd" stroke="#777"/><path d="M1 3h10v8H1z" fill="#ddd" stroke="#666"/><path d="M2.500 4.500h7v5h-7z" fill="#3c74c4"/><path d="M4 12h4v2H4z" fill="#ccc"/></svg><span class="sv">Server: localhost</span><svg class="up" viewBox="0 0 12 14"><path d="M0 1.500h12M1.500 12L6 6l4.500 6" fill="none" stroke="#ccc" stroke-width="1.800"/></svg></div>
      <nav class="tabs">
        <a><svg><use href="#db"/></svg>Databases</a>
        <a><svg viewBox="0 0 16 16"><path d="M4 1h11l-1 3h-2l-2 11H1l1-3h1z" fill="#cfe2f8" stroke="#5c84bc"/></svg>SQL</a>
        <a><svg viewBox="0 0 16 16"><path d="M1 3q3-3 8-1v11H3q-3-5-2-10z" fill="#e4e4e4" stroke="#999"/><path d="M6 8h3v7H6z" fill="#5c94dc"/><path d="M9 5h3v10H9z" fill="#e04a4a"/><path d="M12 9h3v6h-3z" fill="#5cbc4c"/></svg>Status</a>
        <a><svg viewBox="0 0 16 16"><path d="M1 3h14v10H1z" fill="#e8eef6" stroke="#999"/><circle cx="5" cy="6.500" r="1.700" fill="#c8945c"/><path d="M3 11q2-4 4 0z" fill="#3c74c4"/><path d="M9 6h5M9 8h5M9 10h4" stroke="#7c9ccc"/></svg>Users</a>
        <a><svg viewBox="0 0 16 16"><path d="M1 2h11v12H1z" fill="#e8f0fa" stroke="#5c84bc"/><path d="M2 5h9M2 8h9M2 11h9" stroke="#7cb46c"/><path d="M16 11H9M11 8l-3.500 3 3.500 3" stroke="#2c7c2c" stroke-width="1.600" fill="none"/></svg>Export</a>
        <a><svg viewBox="0 0 16 16"><path d="M1 2h11v12H1z" fill="#e8f0fa" stroke="#5c84bc"/><path d="M2 5h9M2 8h9" stroke="#7cb46c"/><path d="M4 11h10M12 8l3.500 3-3.500 3" stroke="#d02c2c" stroke-width="1.600" fill="none"/></svg>Import</a>
        <a><svg><use href="#wrench"/></svg>Settings</a>
        <a><svg viewBox="0 0 16 16"><path d="M6 13V2M10 13V1" stroke="#aaa" stroke-width="1.500"/><path d="M3 13h10v2H3z" fill="#888"/></svg>Replication</a>
        <a><svg viewBox="0 0 16 16"><path d="M4 1h7l3 3v11H4z" fill="#f6f6f6" stroke="#aaa"/><circle cx="6" cy="8" r="2.600" fill="none" stroke="#3c84dc" stroke-width="2.200" stroke-dasharray="3 1"/></svg>Variables</a>
        <a><svg><use href="#bars"/></svg>Charsets</a>
        <a><svg viewBox="0 0 16 16"><use href="#db" width="14" height="13"/><circle cx="11" cy="11" r="3" fill="none" stroke="#777" stroke-width="2.400" stroke-dasharray="2 .7"/></svg>Engines</a>
      </nav>
      <div class="cols">
        <div class="left">
          <section class="box gen"><h2>General Settings</h2>
            <div class="row r1"><svg viewBox="0 0 16 16"><path d="M4 6V4q3-5 6 0v2" fill="none" stroke="#667"/><rect x="1" y="5" width="11" height="8" rx="3" fill="#aab" stroke="#445"/><path d="M6 15l1-4 6-6 2 2-6 6z" fill="#8c84dc" stroke="#334" stroke-width=".6"/><circle cx="15" cy="6" r="1.500" fill="#e03020"/><path d="M4 16l3-4 1 3z" fill="#e0b020"/></svg><a>Change password</a></div>
            <div class="row r2"><svg><use href="#bars"/></svg>Server connection collation <svg class="q q1"><use href="#help"/></svg>:<span class="sel s205">utf8mb4_unicode_ci</span></div>
          </section>
          <section class="box app"><h2>Appearance Settings</h2>
            <div class="row r3"><svg viewBox="0 0 16 16"><path d="M8 1h7v6h-4l-2 3V7L7 6z" fill="#eef6fe" stroke="#5c94cc"/><circle cx="5" cy="7" r="2.800" fill="#d8a060"/><path d="M1 16q0-6 4-6t5 6z" fill="#4c8cdc"/></svg>Language <svg class="q"><use href="#help"/></svg>:<span class="sel s221">English</span></div>
            <div class="row r4"><svg viewBox="0 0 16 16"><ellipse cx="8" cy="8" rx="7.300" ry="6.800" fill="#e8b47c" stroke="#b8783c"/><circle cx="4.500" cy="6" r="1.500" fill="#e04040"/><circle cx="8" cy="4" r="1.500" fill="#f0d840"/><circle cx="12" cy="6" r="1.500" fill="#5cbc4c"/><circle cx="11" cy="10" r="1.500" fill="#4c8cdc"/><circle cx="6" cy="10.500" r="2" fill="#f6ead8"/></svg><a>Theme:</a><span class="sel s101">pmahomme</span></div>
            <div class="row r5"><i>•</i>Font size:<span class="sel s65">82%</span></div>
            <div class="row r6"><svg><use href="#wrench"/></svg><a>More settings</a></div>
          </section>
        </div>
        <div class="rightc">
          <section class="box b1"><h2>Database server</h2><ul><li>Server: Localhost via UNIX socket</li><li>Server type: MySQL</li><li>Server version: 5.6.28-0ubuntu0.15.10.1 - (Ubuntu)</li><li>Protocol version: 10</li><li>User: root@localhost</li><li>Server charset: UTF-8 Unicode (utf8)</li></ul></section>
          <section class="box b2"><h2>Web server</h2><ul><li>Apache/2.4.12 (Ubuntu)</li><li>Database client version: libmysql - 5.6.27</li><li class="tall">PHP extension: mysqli <svg class="q"><use href="#help"/></svg></li><li>PHP version: 5.6.11-1ubuntu3.1</li></ul></section>
          <section class="box b3"><h2>phpMyAdmin</h2><ul><li>Version information: 4.4.13.1deb1</li><li><a>Documentation</a></li><li><a>Wiki</a></li><li><a>Official Homepage</a></li><li><a>Contribute</a></li><li><a>Get support</a></li><li><a>List of changes</a></li></ul></section>
        </div>
      </div>
      <div class="err"><svg viewBox="0 0 16 16"><circle cx="8" cy="8" r="7.500" fill="#e8604c" stroke="#f8b4a4"/><path d="M8 3v6M8 10.500v2" stroke="#fff" stroke-width="2"/></svg><div>The phpMyAdmin configuration storage is not completely configured, some extended features have been deactivated. <a>Find out why</a>.<br>Or alternately go to 'Operations' tab of any database to set it up there.</div></div>
      <div class="foot"><svg viewBox="0 0 16 16"><path d="M1 1h13v14H1z" fill="#f0f0f0" stroke="#aaa"/><path d="M2.500 2.500h8v3h-8z" fill="#2c5cac"/><circle cx="13" cy="3.500" r="2.800" fill="#f4ec3c"/></svg></div>
    </div>
    <div class="tip">Structure</div>
    <svg class="cur" viewBox="0 0 12 19"><path d="M.7 1v14.500l3.500-3 2.200 5.300 2.300-1-2.200-5.100h4.700z" fill="#fff" stroke="#000"/></svg>
    <div class="hoverurl ui">localhost/phpmyadmin/db_structure.php?server=1&amp;db=barlad-project&amp;token=dd83d30fe2db9c9bde63d04a266d3f43</div>
  </div>
  <div class="task ui">
    <div class="start"><svg class="sw" viewBox="0 0 14 14"><path d="M3 2q8-2 8 5t-8 5M5 5q3-1 3 2T5 9.500" fill="none" stroke="#bbb" stroke-width="1.500"/></svg><span>Menu</span></div>
    <svg class="q3" viewBox="0 0 22 22"><path d="M0 1h22v20H0z" fill="#a850a8" /><path d="M0 1h22v3H0z" fill="#d8d4c8"/><path d="M1 7h4v3H1zM1 12h4v3H1z" fill="#eee"/></svg><svg class="q3"><use href="#ffox"/></svg><svg class="q3"><use href="#tbird"/></svg><i class="tg"></i>
    <div class="tk"><svg viewBox="0 0 16 16"><circle cx="8" cy="8" r="7" fill="#7c54a4"/><circle cx="6" cy="6" r="2.500" fill="#fff"/><circle cx="11" cy="7" r="2" fill="#fff"/><path d="M6 10h5l-3 4z" fill="#f0a020"/></svg><span>Buddy List</span></div>
    <div class="tk"><svg><use href="#ffox"/></svg><span>Inbox - andrei.mi...</span></div>
    <div class="tk"><svg viewBox="0 0 16 16"><path d="M0 0h16v16H0z" fill="#5c6c74"/><ellipse cx="8.500" cy="7" rx="4.500" ry="5.500" fill="#c49c84"/><path d="M2 16q6-7 13 0z" fill="#333"/></svg><span>joanne.reed@voi...</span></div>
    <div class="tk"><svg viewBox="0 0 16 16"><path d="M1 1h14v14H1z" fill="#2a2a2a" stroke="#ddd" stroke-width="1.500"/><path d="M3 5l2 2-2 2M6 9h3" stroke="#ddd" fill="none"/></svg><span>voicemailtel@vo...</span></div>
    <div class="tk"><svg viewBox="0 0 16 16"><path d="M1 1h14v14H1z" fill="#333" stroke="#bbb"/><path d="M11 4Q5 3 5 6t6 3-6 3" fill="none" stroke="#f09a2c" stroke-width="2"/></svg><span>/var/www/html/...</span></div>
    <div class="tk act"><svg><use href="#chrome"/></svg><span>localhost / localh...</span></div>
    <div class="tk"><svg viewBox="0 0 16 16"><path d="M2 0h9l3 3v13H2z" fill="#eee"/><path d="M4 4h7M4 6.500h7M4 9h3M4 12h3" stroke="#888"/><path d="M8 9h4v4H8z" fill="#5c94cc"/></svg><span>Untitled 1 - Libre...</span></div>
    <svg class="eyes" viewBox="0 0 28 20"><ellipse cx="7" cy="10" rx="6.500" ry="9.500" fill="#eee" stroke="#000"/><ellipse cx="21" cy="10" rx="6.500" ry="9.500" fill="#eee" stroke="#000"/><circle cx="3.500" cy="9" r="2.500"/><circle cx="17.500" cy="9" r="2.500"/></svg>
    <svg class="xx" viewBox="0 0 17 17"><path d="M0 0h17v17H0z" fill="#eee"/><path d="M0 0h5v3H0zM12 0h5v3h-5z" fill="#5c8ccc"/><path d="M6 1l6 6-6 5 4 4" stroke="#333" stroke-width="2.500" fill="none"/></svg>
    <span class="clock">Mi ian 27, 16:22</span><i class="tg t2g"></i>
    <svg class="y1"><use href="#chrome"/></svg>
    <svg class="y2" viewBox="0 0 20 16"><path d="M1 6h3l5-4v12l-5-4H1z" fill="#ddd"/><path d="M11 5q2 3 0 6M13.500 3.500q3.500 4.500 0 9M16 2q5 6 0 12" stroke="#ccc" stroke-width="1.500" fill="none"/></svg>
    <svg class="y3" viewBox="0 0 18 18"><path d="M4 15V6H1l4.500-5L10 6H7v9zM11 3h3v9h3l-4.500 5L8 12h3z" fill="#ddd"/></svg>
    <svg class="y4" viewBox="0 0 18 12"><path d="M1 1h14v3h2v4h-2v3H1z" fill="#777" stroke="#ccc"/><path d="M8 3l-3 3h4l-1 3 4-4H9z" fill="#eee"/></svg>
  </div>
</section>
</main>
</body>
</html>
```
FILE: styles.css
```css
* { box-sizing: border-box; }
html, body { margin: 0; padding: 0; }
body { width: 3280px; height: 1050px; overflow: hidden; background: #000; font-family: "Liberation Sans", Arial, sans-serif; font-size: 13.12px; color: #444; }
svg { flex: none; display: block; overflow: visible; }
p, ul, h2 { margin: 0; padding: 0; font-weight: normal; }
ul { list-style: none; }
i { flex: none; }
.defs { position: absolute; width: 0; height: 0; }
.ui { font-family: "Noto Sans", "Open Sans", sans-serif; font-size: 14.5px; }
.screen { display: flex; height: 1050px; }

/* ---------- Writer ---------- */
.writer { width: 1680px; flex: none; display: flex; flex-direction: column; background: #f2f1ef; }
.w-top { height: 55px; background: linear-gradient(#45453f, #3c3b37 45%); border-bottom: 1px solid #2b2a28; border-top: 1px solid #2e2e2a; }
.w-title { height: 27px; display: flex; align-items: center; padding-left: 10px; color: #84827b; letter-spacing: .08px; }
.dot { width: 10px; height: 10px; border-radius: 50%; background: radial-gradient(#e8e8e0 35%, #1c1c1a 60%); margin-right: 20px; }
.wbtns { margin-left: auto; display: flex; gap: 2px; margin-right: 10px; }
.wbtns svg { width: 16px; height: 16px; fill: #5d5c56; stroke: #35342f; stroke-width: 1.3; }
.wbtns circle { stroke: none; }
.w-menu { height: 27px; display: flex; align-items: center; padding-left: 8px; gap: 16px; color: #dfdbd2; }
.w-menu u { text-underline-offset: 3px; text-decoration-thickness: 1px; }
.wx { margin-left: auto; margin-right: 7px; width: 9px; height: 9px; stroke: #111; stroke-width: 2.4; }
.bar { display: flex; align-items: center; }
.bar1 { height: 41px; border-bottom: 1px solid #d5d4d2; border-top: 1px solid #fff; padding-bottom: 1px; }
.bar2 { height: 41px; border-top: 1px solid #fcfcfc; border-bottom: 1px solid #d5d4d2; padding-bottom: 1px; }
.grip { width: 4px; height: 8px; margin: 4px 8.5px 0 3px; background: repeating-linear-gradient(#ccc 0 1px, transparent 1px 3px); }
.bar .b { width: 33px; height: 23px; padding: 0 4.5px; }
.bar .a { width: 17px; height: 4px; padding: 0 5px; }
.bar .s { width: 8px; height: 22px; background: linear-gradient(90deg, transparent 3.5px, #d8d7d5 3.5px 4.5px, transparent 4.5px); }
.bar .on { height: 34px; width: 31px; margin: 0 1px; padding: 4px 3.5px; border: 1px solid #c2c1be; border-radius: 5px; background: #fbfbfa; }
.pdft { font: bold 6.5px "Liberation Sans", sans-serif; fill: #222; }
.abct { font: bold 9px "Liberation Sans", sans-serif; fill: #000; }
.bar2 .grip { margin-right: 8px; }
.combo { height: 25px; border: 1px solid #b2b0ac; border-radius: 3px; background: #fff; display: flex; align-items: center; padding-left: 5px; color: #3c3c3c; letter-spacing: .12px; }
.combo em { margin-left: auto; width: 21px; height: 100%; border-left: 1px solid #c8c7c4; background: linear-gradient(#fff, #ececea); display: grid; place-items: center; }
.combo em::after { content: ""; border: 4px solid transparent; border-top: 6px solid #777; border-bottom: 0; }
.c1 { width: 156px; }
.c2 { width: 66px; }
.bar .s2 { width: 10px; }
.bar2 .g2 { margin: 4px 11px 0 4px; }
.aa { font: bold 15px "Liberation Serif", serif; fill: #34629f; }
.ca { font: bold 16px "Liberation Serif", serif; fill: #8fb3de; stroke: #34629f; stroke-width: .7; }
.w-body { flex: 1; display: flex; min-height: 0; }
.canvas { width: 1620px; display: flex; flex-direction: column; overflow: hidden; }
.rulerrow { height: 38px; flex: none; display: flex; }
.tabsel { width: 7px; height: 7px; margin: 9px 402px 0 8px; border: solid #888; border-width: 0 0 2px 2px; }
.ruler { position: relative; width: 785px; height: 16px; margin-top: 3px; border: 1px solid #222; background: #f2f1ef; }
.rwhite { position: absolute; left: 75px; top: -1px; width: 636px; height: 16px; background: #fff; border-right: 1px solid #222; border-left: 1px solid #222; }
.rwhite::after { content: ""; position: absolute; left: 46px; right: 0; top: 14px; height: 3px; background: repeating-linear-gradient(90deg, #888 0 3px, transparent 3px 46.8px); }
.nums { position: absolute; left: 4px; top: -1px; height: 16px; right: 4px; display: flex; padding-left: 118px; color: #999; font-size: 10px; line-height: 15px; background: repeating-linear-gradient(90deg, transparent 0 22.7px, #333 22.7px 23.7px, transparent 23.7px 47.4px) -.3px 4px / 100% 7px no-repeat, repeating-linear-gradient(90deg, #333 0 1px, transparent 1px 11.85px) -.5px 6px / 100% 3px no-repeat; }
.nums span { width: 94.8px; flex: none; text-align: center; }
.nums span:last-child { width: 90px; }
.ind { position: absolute; left: 69px; top: -2px; width: 12px; height: 18px; }
.ind.r { left: 704px; }
.sheet { margin-left: 415px; width: 789px; flex: 1; background: #fff; border: 1px solid #c4c3c0; border-bottom: 0; box-shadow: 2px 2px 6px #bbb; }
.corners { display: flex; justify-content: space-between; padding: 99px 62px 0 63px; }
.corners i { width: 14px; height: 14px; border: solid #ccc; border-width: 0 1px 1px 0; }
.corners i + i { border-width: 0 0 1px 1px; }
.text { padding-left: 77px; color: #000; font-family: "Liberation Serif", "Times New Roman", serif; font-size: 16px; letter-spacing: -.083px; }
.text p { height: 18.32px; line-height: 18.32px; white-space: nowrap; width: max-content; }
.text s { text-decoration: none; background: url("data:image/svg+xml,%3Csvg xmlns='http://www.w3.org/2000/svg' width='4' height='3'%3E%3Cpath d='M0 2.5L2 .5L4 2.5' fill='none' stroke='red' stroke-width='.9'/%3E%3C/svg%3E") 0 100% / 4px 3px repeat-x; }
.text em, .text b { font-weight: normal; font-family: "Noto Sans", "Open Sans", sans-serif; font-size: 15.5px; }
.text em s, .text b s { background-position: 0 calc(100% - 1px); }
.text em { letter-spacing: -.01px; }
.text .wide { font-size: 16px; letter-spacing: 2.5px; }
.text .nar { font-size: 16px; letter-spacing: .47px; }
.text .pm { margin-right: 3px; font-size: 16.5px; letter-spacing: .8px; }
.vscroll { width: 13px; display: flex; flex-direction: column; background: linear-gradient(90deg, #c9c8c6, #dedddb); border-radius: 6px; }
.vscroll i { border: 1px solid #aaa9a6; background: linear-gradient(90deg, #fff, #e2e1df); border-radius: 6px 6px 0 0; }
.vscroll .up { height: 13px; display: grid; place-items: center; }
.vscroll .up::after { content: ""; border: 3px solid transparent; border-bottom-color: #999; border-top: 0; }
.vscroll .thumb { height: 650px; border-radius: 6px; }
.vscroll .down { margin-top: auto; height: 15px; border-radius: 0 0 6px 6px; display: grid; place-items: center; }
.vscroll .down::after { content: ""; border: 3px solid transparent; border-top-color: #777; border-bottom: 0; }
.split { width: 8px; border: 2px solid #333; background: linear-gradient(#555 0 0) 1px 410px / 2px 70px no-repeat #f6f5f4; }
.side { width: 39px; border-top: 2px solid #333; display: flex; flex-direction: column; align-items: center; }
.side .sm { width: 10px; height: 10px; margin-top: 14px; margin-bottom: 13px; }
.side .hr { width: 24px; height: 1px; background: #d5d4d2; margin-bottom: 3px; }
.side div { width: 32px; height: 32px; display: grid; place-items: center; margin-bottom: 3px; }
.side div.on { border: 1px solid #bbb; border-radius: 4px; background: #f6f5f4; }
.side div svg { width: 24px; height: 24px; }
.w-status { height: 23px; border-top: 2px solid #2e2e2c; display: flex; align-items: center; font-size: 12px; color: #4c4c4c; }
.w-status span { height: 18px; line-height: 18px; border-right: 1px solid #ccc; display: flex; align-items: center; white-space: nowrap; flex: none; }
.st1 { width: 233px; padding-left: 10px; letter-spacing: -.15px; }
.st2 { width: 342px; padding-left: 8px; letter-spacing: -.15px; }
.st3 { width: 248px; padding-left: 7px; }
.st4 { width: 249px; justify-content: center; letter-spacing: -.12px; }
.st5 { width: 67px; }
.st6 { width: 29px; justify-content: center; }
.st7 { width: 29px; justify-content: center; }
.st8 { width: 29px; }
.st9 { width: 263px; justify-content: flex-end; padding-right: 8px; }
.st10 { width: 143px; justify-content: center; }
.w-status .st11 { border: 0; padding-left: 7px; }
.st6 svg, .st7 svg { width: 14px; height: 14px; }
.st9 svg { width: 56px; height: 14px; }
.st10 svg { width: 128px; height: 16px; }

/* ---------- Browser ---------- */
.right { width: 1600px; flex: none; display: flex; flex-direction: column; background: #000; }
.c-tabs { height: 25px; background: linear-gradient(#5183d4, #4370c8 70%, #4370c8); border-bottom: 1px solid #35569c; display: flex; padding-left: 8px; }
.tab { height: 25px; margin-right: -6px; background: #5472a8; clip-path: polygon(0 100%, 8px 15%, 12px 4%, calc(100% - 13px) 4%, calc(100% - 9px) 15%, 100% 100%); flex: none; }
.tab .in { height: 25px; margin: 0 1px; background: #9dbff0; clip-path: polygon(0 100%, 8px 18%, 12px 8%, calc(100% - 13px) 8%, calc(100% - 9px) 18%, 100% 100%); display: flex; align-items: center; color: #333; }
.tab span { white-space: nowrap; overflow: hidden; flex: 1; }
.tab b { font: 18px/16px "Liberation Sans", sans-serif; color: #555; width: 11px; text-align: center; }
.tab svg { width: 15px; height: 16px; margin-right: 4px; }
.pmat { font: italic bold 7px "Liberation Sans", sans-serif; fill: #447; }
.t1 { width: 202px; }
.t2 { width: 196px; }
.t3 { width: 205px; background: #7c94c0; z-index: 2; }
.t1 .in { padding: 0 10px 0 14px; }
.t2 .in { padding: 0 9px; }
.t3 .in { padding: 0 15px 0 11px; background: linear-gradient(#fff, #f4f4f4); color: #222; }
.fade { -webkit-mask-image: linear-gradient(90deg, #000 calc(100% - 30px), rgba(0, 0, 0, .35)); mask-image: linear-gradient(90deg, #000 calc(100% - 30px), rgba(0, 0, 0, .35)); }
.newtab { width: 31px; height: 15px; margin: 6px 0 0 3px; background: #9dbff0; clip-path: polygon(0 0, 80% 0, 100% 100%, 16% 100%); }
.c-win { margin-left: auto; display: flex; gap: 3px; padding: 3px 3px 0 0; }
.c-win span { width: 23px; height: 16px; border: 1px solid #365ba8; border-radius: 2px; background: #4f7ecf; display: grid; place-items: center; }
.c-win .user { width: 55px; height: 17px; margin: -1px 4px 0 0; font-size: 13px; color: #fff; line-height: 14px; background: #4a76c8; }
.c-win svg { width: 11px; height: 11px; fill: none; stroke: #fff; stroke-width: 1.2; }
.c-bar { height: 32px; background: linear-gradient(#f5f5f5, #ececec); display: flex; align-items: center; padding-left: 10px; padding-right: 8px; }
.c-bar > svg { width: 15px; height: 16px; fill: none; stroke: #555; stroke-width: 2.4; margin-right: 14px; }
.c-bar .n2 { stroke: #c4c4c4; }
.c-bar .n4 { margin-right: 11px; }
.omni { width: 1314px; height: 27px; background: #fff; border: 1px solid #a9a9a9; border-radius: 2px; display: flex; align-items: center; padding: 0 4px 0 5px; color: #808080; font-size: 15.5px; letter-spacing: -.145px; white-space: nowrap; }
.omni strong { font-weight: normal; color: #000; }
.omni svg { width: 16px; height: 16px; margin-right: 5px; }
.omni .fav { width: 18px; height: 18px; margin: 0 0 0 auto; }
.wheel { width: 18px; height: 18px; border-radius: 50%; margin: 0 14px 0 10px; background: conic-gradient(#4060ff, #f040f0, #f02020, #f0e020, #30e030, #30e0e0, #4060ff); }
.c-bar > .x { width: 18px; height: 18px; }
.c-bar > .burger { width: 14px; height: 14px; margin: 0 0 0 2px; }
.c-marks { height: 28px; background: linear-gradient(#ebebeb, #dedede); border-bottom: 1px solid #a0a0a0; display: flex; align-items: center; color: #111; padding: 0 0 2px 8px; white-space: nowrap; }
.m { display: flex; align-items: center; flex: none; }
.m svg { width: 14px; height: 14px; margin-right: 6px; }
.m0 { width: 68px; }
.m0 svg { width: 13px; height: 13px; margin-right: 7px; }
.m1 { width: 138px; }
.m2 { width: 28px; }
.m2 svg { width: 16px; }
.m3 { width: 151px; }
.m3 svg { width: 16px; height: 16px; margin-right: 5px; }
.m4 { width: 98px; }
.m5 { width: 151px; letter-spacing: -.08px; }
.m5 svg { margin-right: 7px; }
.m6 { width: 108px; letter-spacing: .25px; }
.m6 svg { width: 12px; margin-right: 7px; }
.m7 { width: 149px; letter-spacing: -.1px; }
.m8 { width: 114px; }
.m9 { width: 150px; }
.m10 { width: 263px; }
.m8 svg, .m9 svg, .m10 svg { width: 16px; height: 16px; margin-right: 5px; }
.more { width: 16px; color: #555; }
.other { border-left: 1px solid #c4c4c4; padding-left: 8px; }

/* ---------- phpMyAdmin ---------- */
.pma { height: 791px; flex: none; background: #fff; display: flex; position: relative; }
.nav { width: 243px; background: linear-gradient(90deg, #f3f3f3 88%, #dadddf); border-right: 3px solid #aaa; padding-top: 5px; color: #000; }
.logo { height: 29px; padding-left: 39px; display: flex; align-items: baseline; font: italic 23px/27px "Open Sans", "Noto Sans", sans-serif; }
.logo i { color: #6c6ca6; font-weight: 600; font-size: 23px; letter-spacing: -.3px; }
.logo b { color: #f89c0e; font-weight: 700; font-size: 27px; letter-spacing: -.1px; }
.nicons { display: flex; height: 16px; padding-left: 74px; gap: 4.5px; margin-top: 5px; }
.nicons svg { width: 16px; height: 16px; }
.rf { display: flex; gap: 4px; padding: 6px 0 0 10px; color: #444; }
.rf span { height: 17px; line-height: 15px; border: 1px solid #ddd; border-radius: 3px; padding: 0 3.5px; }
.coll { display: flex; gap: 4px; padding: 4px 0 0 182px; }
.coll svg { width: 16px; height: 16px; }
.coll svg + svg { width: 14px; }
.tree { padding: 6px 4px 0 5px; }
.tree li { height: 23.7px; display: flex; align-items: center; background: linear-gradient(#666 0 0) 10px 0 / 1px 100% no-repeat, linear-gradient(#666 0 0) 16px 13px / 9px 1px no-repeat; }
.tree li span { margin-top: -5px; }
.tree .first { background: linear-gradient(#666 0 0) 10px 14px / 1px 100% no-repeat, linear-gradient(#666 0 0) 10px 13px / 15px 1px no-repeat; }
.tree .first i { width: 18px; }
.tree .last { background: linear-gradient(#666 0 0) 10px 0 / 1px 12px no-repeat, linear-gradient(#666 0 0) 16px 13px / 9px 1px no-repeat; }
.tree .hov { background: linear-gradient(#666 0 0) 10px 0 / 1px 100% no-repeat, linear-gradient(#666 0 0) 16px 13px / 9px 1px no-repeat, linear-gradient(90deg, #ddd 80%, #e4e4e4); }
.tree .hov span { text-decoration: underline; }
.tree .p { width: 14px; height: 14px; margin-left: 4px; }
.tree .d { width: 14px; height: 14px; margin: 0 5px 0 6px; }
.main { flex: 1; }
.crumb { height: 26px; background: #888; display: flex; align-items: center; color: #fff; border-bottom: 1px solid #999; padding-bottom: 1px; }
.crumb .back { width: 18px; height: 23px; background: #f4f4f4; color: #555; text-align: center; line-height: 20px; margin-right: 13px; font-size: 12px; }
.crumb svg { width: 16px; height: 16px; margin-right: 2px; }
.crumb .sv { text-shadow: 0 1px 0 #000; }
.crumb .up { width: 11px; height: 11px; margin: 0 6px 0 auto; }
.tabs { height: 33px; display: flex; background: linear-gradient(#fff, #dcdcdc); border-bottom: 1px solid #bbb; }
.tabs a { display: flex; align-items: center; font-weight: bold; color: #235a81; padding: 0 8px 0 12px; border-right: 1px solid #c4c4c4; box-shadow: 1px 0 0 #fff; margin-right: 1px; letter-spacing: -.11px; }
.tabs svg { width: 16px; height: 16px; margin-right: 10.5px; }
.cols { display: flex; padding: 13px 0 0 4px; height: 581px; }
.left { width: 808px; margin-right: 13px; }
.rightc { width: 519px; }
.box { border: 1px solid #999; border-radius: 4px; background: #f3f3f3; box-shadow: 2px 2px 5px #ccc; margin-bottom: 13.5px; }
.box h2 { height: 29px; background: #bbb; box-shadow: 0 0 12px #999 inset; color: #fff; font-size: 20.99px; line-height: 26px; padding-left: 7px; text-shadow: 0 1px 0 #777; border-radius: 3px 3px 0 0; }
.gen { height: 132px; }
.app { height: 223px; }
.b1 { height: 184px; }
.b2 { height: 146.5px; }
.b3 { height: 203px; }
.row { display: flex; align-items: center; height: 25px; padding-left: 18px; }
.row > svg { width: 16px; height: 16px; margin: 2px 4px 0 0; }
.row > .q { width: 14px; height: 14px; margin: 4px 2px 0 3px; }
.row > .q1 { margin-left: 8px; }
.row a, .box li a { color: #235a81; }
.r1 { margin-top: 12px; }
.r2 { margin-top: 7px; }
.r3 { margin-top: 22px; }
.r4 { margin-top: 16px; }
.r5 { margin-top: 15px; }
.r6 { margin-top: 14px; }
.row i { width: 21px; padding-left: 7px; font-style: normal; }
.sel { height: 25px; border: 1px solid #aaa; border-radius: 2px; background: #fff; color: #333; padding: 0 7px; margin-left: 10px; display: flex; align-items: center; justify-content: space-between; }
.sel::after { content: ""; border: 3.5px solid transparent; border-top: 7px solid #222; border-bottom: 0; margin-right: -1px; }
.s205 { width: 206px; margin-left: 8px; }
.s221 { width: 222px; margin-left: 12px; }
.s101 { width: 101px; }
.s65 { width: 65px; }
.box ul { padding: 16px 0 0 40px; }
.box li { height: 18.9px; line-height: 18.9px; display: flex; align-items: center; white-space: pre; }
.box li::before { content: ""; width: 4px; height: 4px; border-radius: 50%; background: #444; margin: 1px 10px 0 -14px; }
.box .tall { height: 21px; }
.box .tall .q { width: 14px; height: 14px; margin: 3px 0 0 6px; }
.err { margin: 11px 8px 0 4px; height: 54px; border: 1px solid #800000; border-radius: 5px; background: #ffc0cb; color: #000; display: flex; padding: 10px 0 0 14px; line-height: 17px; box-shadow: 0 1px 1px #fff inset; }
.err svg { width: 15px; height: 15px; margin: 2px 4px 0 0; }
.err a { color: #235a81; text-decoration: underline; }
.foot { margin: 13px 14px 0 11px; border-top: 1px solid #bbb; display: flex; justify-content: flex-end; padding-top: 2px; }
.foot svg { width: 15px; height: 15px; }
.tip { position: absolute; left: 122px; top: 156px; width: 71px; height: 21px; background: #000; color: #fff; font: 14px/20px "Noto Sans", sans-serif; text-align: center; box-shadow: 1px 2px 6px rgba(0, 0, 0, .5); }
.cur { position: absolute; left: 110px; top: 140px; width: 13px; height: 20px; }
.hoverurl { position: absolute; left: 0; bottom: 0; width: 807px; height: 23px; background: #dfdfdf; border-top-right-radius: 4px; color: #808080; padding-left: 3px; line-height: 22px; white-space: nowrap; }
.task { height: 24px; background: linear-gradient(#42413c, #3a3935); display: flex; align-items: center; color: #dfdbd2; padding-left: 6px; white-space: nowrap; flex: none; }
.start { width: 62px; display: flex; align-items: center; font-size: 14px; letter-spacing: -.5px; }
.sw { width: 15px; height: 15px; margin-right: 6px; }
.q3 { width: 21px; height: 21px; margin-right: 3px; }
.tg { width: 4px; height: 9px; margin: 0 4px 0 2px; background: repeating-linear-gradient(#666 0 1px, transparent 1px 3px); }
.tk { width: 162px; margin-right: 1.3px; height: 23px; border: 1px solid #2c2b28; border-radius: 3px; display: flex; align-items: center; padding-left: 5px; }
.tk svg { width: 15px; height: 15px; margin-right: 8px; }
.act { background: #2c2b28; }
.eyes { width: 28px; height: 20px; margin: 0 7px 0 5px; }
.xx { width: 17px; height: 17px; }
.clock { margin-left: auto; letter-spacing: -.29px; }
.t2g { margin: 0 5px 0 3px; }
.y1 { width: 20px; height: 20px; margin-right: 4px; }
.y2 { width: 20px; height: 16px; margin-right: 6px; }
.y3 { width: 17px; height: 17px; margin-right: 8px; }
.y4 { width: 18px; height: 12px; margin-right: 3px; }
```
